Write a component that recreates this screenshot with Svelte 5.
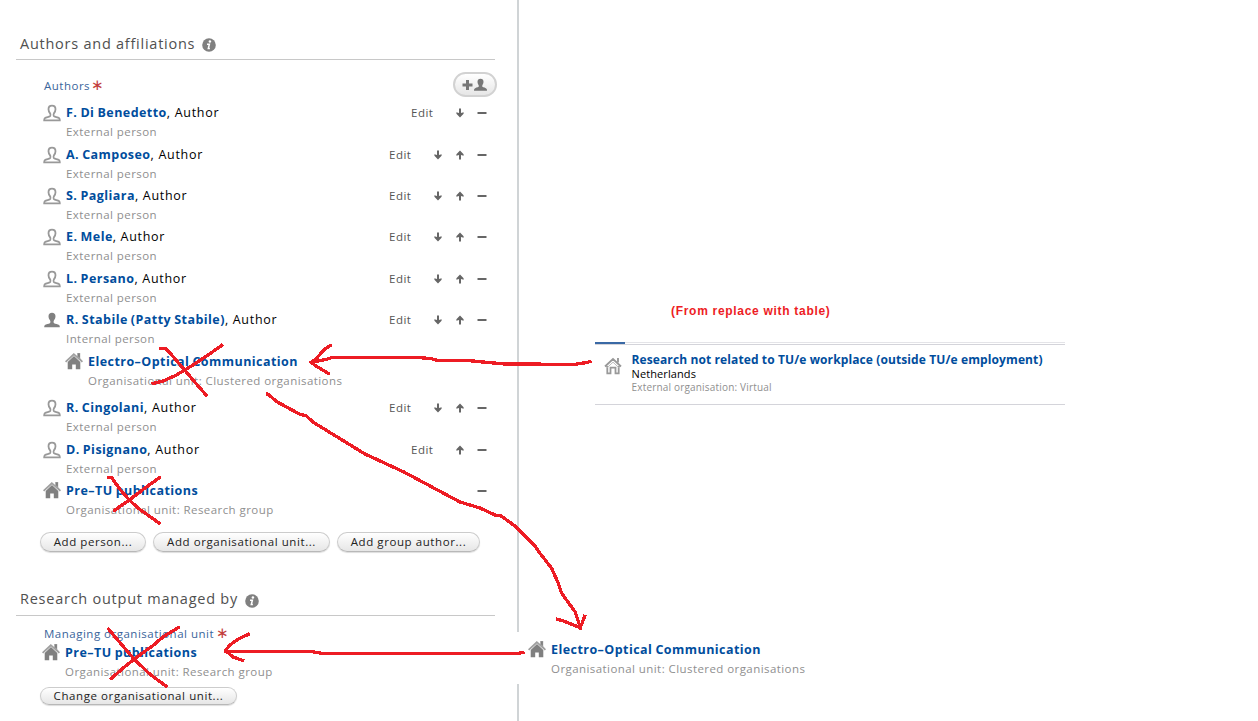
<script>
  const authors = [
    { name: 'F. Di Benedetto', kind: 'External person', tools: ['edit', 'gap', 'down', 'minus'] },
    { name: 'A. Camposeo', kind: 'External person', tools: ['edit', 'gap', 'down', 'up', 'minus'] },
    { name: 'S. Pagliara', kind: 'External person', tools: ['edit', 'gap', 'down', 'up', 'minus'] },
    { name: 'E. Mele', kind: 'External person', tools: ['edit', 'gap', 'down', 'up', 'minus'] },
    { name: 'L. Persano', kind: 'External person', tools: ['edit', 'gap', 'down', 'up', 'minus'] },
    {
      name: 'R. Stabile (Patty Stabile)',
      kind: 'Internal person',
      internal: true,
      tools: ['edit', 'gap', 'down', 'up', 'minus'],
      unit: { name: 'Electro–Optical Communication', kind: 'Organisational unit: Clustered organisations' }
    },
    { name: 'R. Cingolani', kind: 'External person', tools: ['edit', 'gap', 'down', 'up', 'minus'] },
    { name: 'D. Pisignano', kind: 'External person', tools: ['edit', 'gap', 'up', 'minus'] },
    { name: 'Pre–TU publications', kind: 'Organisational unit: Research group', org: true, tools: ['minus'] }
  ];

  const strokes = [
    '161,348.5 166.5,349 173,356.5 185,370.5 193,380 206,395',
    '221.500,345.500 213,351.5 203,358.5 193,365 176.5,375 163,381 153,383.5',
    '590,361.7 585,362.8 575,364.3 505,364 483,362 468,360.5 437,360.3 431,358.6 415,357.3 332,357.3 327,359.3 311,362.3',
    '330.500,345.6 325,348.7 316,359 311,362.3 317,366.7 328.500,373.5',
    '267.500,394.3 269,395 276.7,401.7 300,414.3 306,415.7 313.3,422.3 365,454 403.3,471.7 460,502 480,508 495,515 500.7,515.7 515,526 535,546 540,553.3 551.7,568.3 558.3,583.3 561.7,593.3 575,611.7 580.7,628.3',
    '557.500,619.3 562.7,620.7 580,627.7 582.3,622.7 584.500,616.5',
    '108.500,477.5 111.7,477.8 120,489.3 129.3,500 138.3,508.3 159,523',
    '159.500,477.600 143.3,489.3 129.3,500 114.500,510.3',
    '108.8,629.3 120,642.7 134.3,659.3 150,674.3 166.3,686.3',
    '178.5,627.5 163.3,636.7 153.3,645.3 134.3,659 121.7,669.3 111.2,678.5',
    '523,652.6 517,653.5 325,653.8 312,651.6 226,651.3',
    '248.500,634.3 238.3,639 230,645 225.5,650.5 233,657 242.500,660.3'
  ];
</script>

{#snippet person(solid)}
  <svg class="icon person" class:solid width="18" height="18" viewBox="0 0 18 18">
    <path d="M9 1.700c-2.200 0-3.500 1.400-3.500 3.500 0 2 .8 3.100 1.600 4.200.5.700.4 2.400-.2 2.900-1.200.8-3.900.7-5 1.800-.6.600-.7 1.300-.7 2.200h15.600c0-.9-.1-1.600-.7-2.200-1.100-1.100-3.800-1-5-1.800-.6-.5-.7-2.200-.2-2.900.8-1.100 1.600-2.200 1.600-4.200C12.500 3.100 11.200 1.700 9 1.700z" />
  </svg>
{/snippet}

{#snippet house()}
  <svg class="icon" width="18" height="18" viewBox="0 0 18 18">
    <path fill="#a0a0a0" d="M12.200 1h3v5.200L18 9.200l-1.200 1.200L9 3.600l-7.800 6.800L0 9.200 8.800 1l3.400 3z" />
    <path fill="#808080" d="M9 4l6.300 5.900v7.300h-4.500v-4.700H7.200v4.700H2.700V9.900zM13 1.400h1.800v4.400L13 4.200z" />
  </svg>
{/snippet}

{#snippet info()}
  <svg class="info" width="14" height="14" viewBox="0 0 14 14">
    <circle cx="7" cy="7" r="6.800" fill="#808080" />
    <circle cx="7.900" cy="3.600" r="1.250" fill="#fff" />
    <path d="M5 6.200h2.400l-1.100 4.400h1.600" fill="none" stroke="#fff" stroke-width="1.500" />
  </svg>
{/snippet}

{#snippet entry(name, kind, role = false)}
  <div class="text">
    <div class="name"><b>{name}</b>{#if role}<span class="role">, Author</span>{/if}</div>
    <div class="kind">{kind}</div>
  </div>
{/snippet}

{#snippet tool(t)}
  {#if t === 'edit'}
    <span class="edit">Edit</span>
  {:else if t === 'gap'}
    <i></i>
  {:else}
    <svg width="10" height="10" viewBox="0 0 10 10" fill="#666">
      {#if t === 'down'}<path d="M4 .5h2v4.500l2.600-.8v1.600L5 9.600 1.400 5.800V4.200L4 5z" />
      {:else if t === 'up'}<path d="M4 9.500h2V5l2.600.8V4.200L5 .4 1.400 4.200v1.600L4 5z" />
      {:else}<path d="M.5 4h9v2H.5z" />{/if}
    </svg>
  {/if}
{/snippet}

<main>
  <section class="form">
    <h2><span>Authors and affiliations</span>{@render info()}</h2>
    <div class="field">
      <div class="label">Authors<em class="spaced">∗</em></div>
      <button class="add" aria-label="Add">
        <svg width="26" height="14" viewBox="0 0 26 14" fill="#777">
          <path d="M4 2h3v3.500h3.500v3H7V12H4V8.500H.5v-3H4zM18.500.8c-2 0-3 1.300-3 3 0 1.600.6 2.600 1.200 3.500v1.500c-1 .6-3.600.9-4.400 2.200-.3.500-.3 1-.3 1.800h13c0-.8 0-1.300-.3-1.800-.8-1.300-3.400-1.600-4.400-2.200V7.300c.6-.9 1.200-1.900 1.200-3.500 0-1.700-1-3-3-3z" />
        </svg>
      </button>
    </div>
    <div class="authors">
      {#each authors as a}
        <div class="row">
          {#if a.org}{@render house()}{:else}{@render person(a.internal)}{/if}
          {@render entry(a.name, a.kind, !a.org)}
          <div class="tools">{#each a.tools as t}{@render tool(t)}{/each}</div>
        </div>
        {#if a.unit}
          <div class="row nested">
            {@render house()}
            {@render entry(a.unit.name, a.unit.kind)}
          </div>
        {/if}
      {/each}
    </div>
    <div class="buttons">
      <button class="w1">Add person...</button>
      <button class="w2">Add organisational unit...</button>
      <button class="w3">Add group author...</button>
    </div>

    <h2 class="second"><span>Research output managed by</span>{@render info()}</h2>
    <div class="label managing">Managing organisational unit<em>∗</em></div>
    <div class="row managed">
      {@render house()}
      {@render entry('Pre–TU publications', 'Organisational unit: Research group')}
    </div>
    <div class="buttons change"><button class="w4">Change organisational unit...</button></div>
  </section>

  <div class="divider"><span></span><span></span></div>

  <section class="side">
    <p class="note">(From replace with table)</p>
    <div class="tabline"><span></span></div>
    <div class="result">
      <svg class="outline" width="18" height="18" viewBox="0 0 18 18" fill="none" stroke="#999">
        <path stroke-width="1.800" d="M1 9.500L9 2l8 7.500M3.300 9v7.300h3.200v-5.600h5v5.600h3.200V9" />
        <path stroke-width="1.900" d="M14 5.500V1" />
        <path stroke-width="1" stroke="#bbb" d="M3.300 10.500L9 5.200l5.700 5.300" />
      </svg>
      <div class="details">
        <b>Research not related to TU/e workplace (outside TU/e employment)</b>
        <span class="country">Netherlands</span>
        <span class="virtual">External organisation: Virtual</span>
      </div>
    </div>
    <div class="row target">
      {@render house()}
      {@render entry('Electro–Optical Communication', 'Organisational unit: Clustered organisations')}
    </div>
  </section>

  <svg class="ink" width="1258" height="721" viewBox="0 0 1258 721">
    {#each strokes as points}<polyline {points} />{/each}
  </svg>
</main>

<style>
  :global(body) { background: #fff; }
  main {
    position: relative;
    display: grid;
    grid-template-columns: 517px 2px 1fr;
    height: 721px;
    overflow: hidden;
    font-family: "Open Sans", "Noto Sans", sans-serif;
    font-size: 12px;
    white-space: nowrap;
  }
  .form { padding: 29px 0 0 16px; }
  h2 {
    display: flex;
    align-items: center;
    gap: 7px;
    box-sizing: border-box;
    width: 479px;
    height: 31px;
    margin: 0;
    padding-left: 4px;
    border-bottom: 1px solid #c8c8c8;
    font-size: 14.5px;
    font-weight: 400;
    letter-spacing: 0.75px;
    color: #505050;
  }
  h2 span { margin-top: -2px; }
  h2 .info { margin-top: 2px; }
  .field { display: flex; justify-content: space-between; width: 481px; height: 43.2px; }
  .label { padding: 16px 0 0 28px; line-height: 20px; font-size: 11.5px; letter-spacing: 0.5px; color: #3a659b; }
  .label em { display: inline-block; height: 12px; margin-left: 2px; font: 400 15px/12px "DejaVu Sans", sans-serif; letter-spacing: 0; color: #c33f3f; }
  .label .spaced { margin-left: 1px; }
  button {
    box-sizing: border-box;
    height: 20px;
    padding: 0;
    border: 1px solid #ccc;
    border-bottom-color: #b8b8b8;
    border-radius: 10px;
    background: linear-gradient(#fff, #e6e6e6);
    box-shadow: 0 1px 1px #ddd;
    font: 11.5px/17px "Open Sans", sans-serif;
    letter-spacing: 0.58px;
    color: #222;
  }
  .add { width: 44px; height: 25px; margin-top: 12px; border: 2px solid #d2d2d2; border-radius: 13px; box-shadow: none; }
  .add svg { display: block; margin: 0 auto; }
  .row { display: flex; height: 41.4px; width: 473px; padding-left: 28px; box-sizing: border-box; }
  .icon { flex: none; margin: 0 4px 0 -1px; }
  .person { margin-top: 1px; }
  .icon path { stroke: none; }
  .icon:not(.solid) path:only-child { fill: #fff; stroke: #999; stroke-width: 1.8; }
  .solid path { fill: #808080; }
  .text { flex: 1; padding-left: 1px; }
  .name { height: 20px; line-height: 20px; font-size: 12.5px; color: #000; }
  .name b { color: #004d9d; letter-spacing: 0.45px; word-spacing: -0.6px; }
  .role { letter-spacing: 0.7px; }
  .kind { line-height: 18px; font-size: 11.5px; letter-spacing: 0.43px; color: #8f8f8f; }
  .tools { display: flex; align-items: center; gap: 12px; height: 20px; margin-right: 2px; }
  .tools i { width: 0; margin-left: -4px; }
  .edit { margin-top: -1px; font-size: 11.5px; letter-spacing: 0.5px; color: #555; width: 24px; }
  .nested { box-sizing: border-box; padding: 0.6px 0 0 50px; height: 46.8px; }
  .buttons { display: flex; gap: 7px; margin: 9px 0 0 24px; }
  .w1 { width: 106px; }
  .w2 { width: 177px; }
  .w3 { width: 143px; }
  .w4 { width: 197px; height: 18px; line-height: 15px; }
  .second { margin-top: 33px; }
  .managing { padding-top: 8px; height: 19px; line-height: 20px; }
  .managed { padding-left: 27px; margin-top: 0; height: 43px; }
  .change { margin: 1px 0 0 24px; }
  .divider { display: flex; flex-direction: column; justify-content: space-between; }
  .divider span { background: #d0d4d6; height: 632px; }
  .divider span + span { height: 37px; }
  .side { padding-left: 76px; }
  .note { margin: 301px 0 0 76px; height: 20px; font: bold 12px/20px "Liberation Sans", sans-serif; letter-spacing: 0.7px; color: #ed1c24; }
  .tabline { width: 470px; height: 1px; margin-top: 21px; border-top: 1px solid #e4e4e8; border-bottom: 1px solid #d4d4da; }
  .tabline span { display: block; width: 30px; height: 2px; margin-top: -1px; background: #3a69a5; }
  .result { display: flex; box-sizing: border-box; width: 470px; height: 60px; padding: 8px 0 0 9px; border-bottom: 1px solid #d4d4da; }
  .outline { margin: 4px 9.500px 0 0; }
  .details { display: flex; flex-direction: column; line-height: 14px; }
  .details b { color: #004d9d; font-size: 12px; letter-spacing: 0.11px; }
  .country { font-size: 11px; letter-spacing: 0.1px; }
  .virtual { font-size: 10px; line-height: 13px; letter-spacing: 0.18px; color: #8f8f8f; }
  .target { margin: 235px 0 0 -94px; }
  .ink { position: absolute; inset: 0; }
  .ink polyline { fill: none; stroke: #ed1c24; stroke-width: 3.3; stroke-linecap: square; stroke-linejoin: round; shape-rendering: crispEdges; }
</style>
